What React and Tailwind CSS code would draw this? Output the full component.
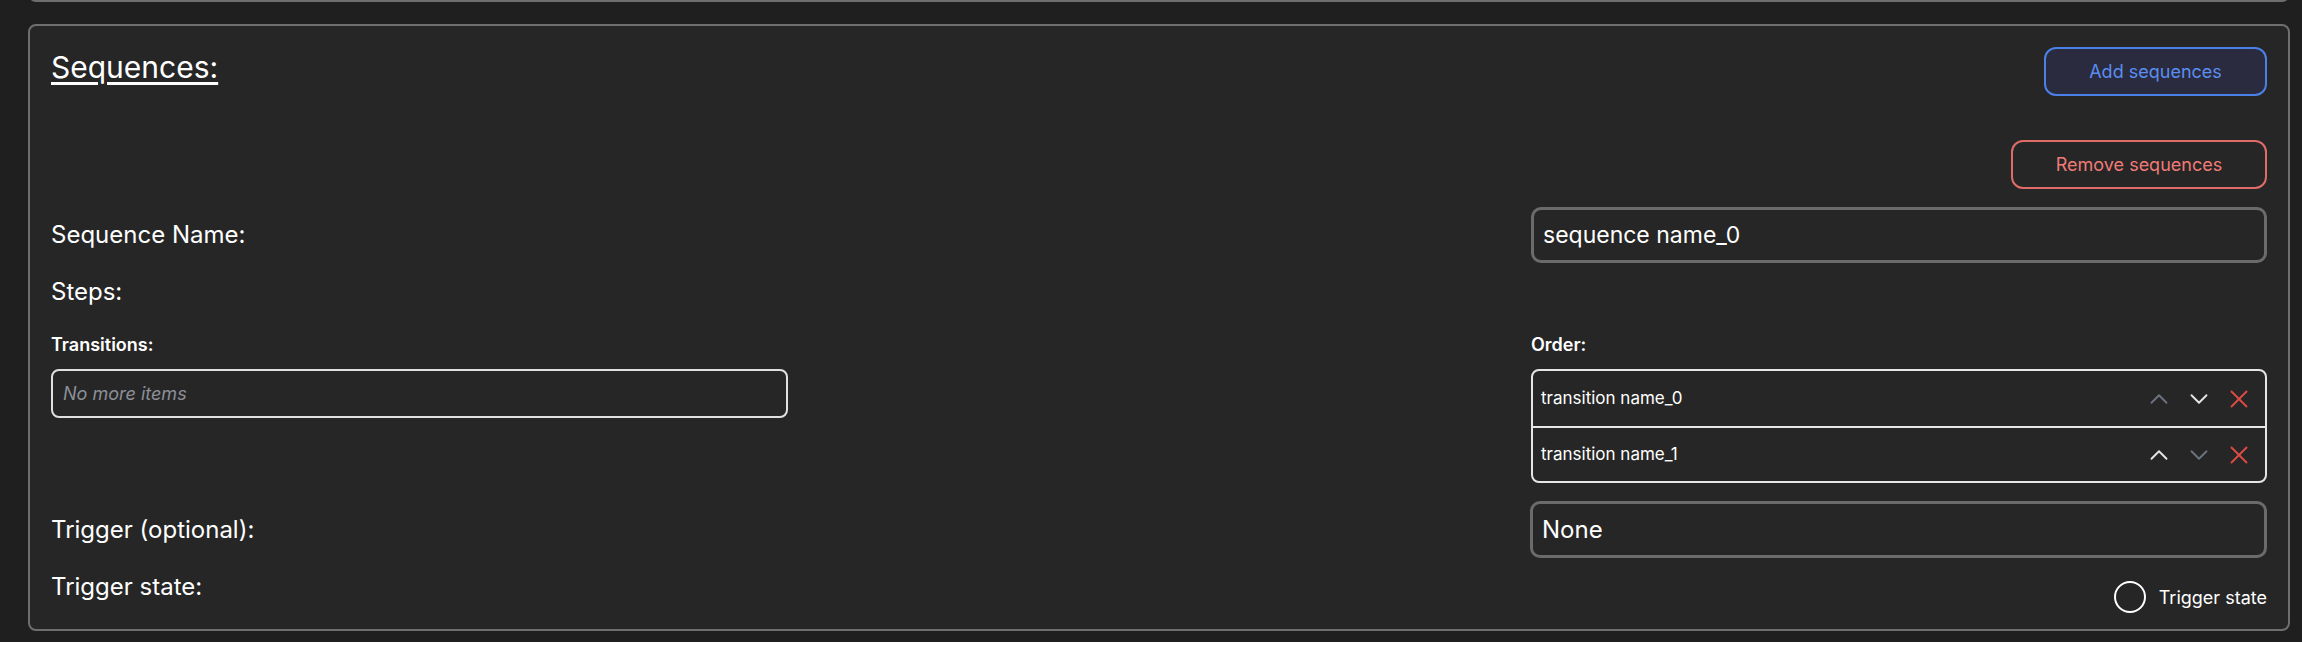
import { ChevronUp, ChevronDown, X } from "lucide-react";

const transitions = [
  { name: "transition name_0", first: true, last: false },
  { name: "transition name_1", first: false, last: true },
];

const OrderRow = ({ item, divider }) => (
  <div
    className={
      "flex h-[55px] items-center justify-between pl-[8px] pr-[11px] " +
      (divider ? "border-t-2 border-[#e5e5e5]" : "")
    }
  >
    <span className="text-[17px] text-white">{item.name}</span>
    <div className="flex items-center gap-[10px]">
      <ChevronUp
        size={30}
        strokeWidth={1.5}
        className={item.first ? "text-[#6b7280]" : "text-[#e5e5e5]"}
      />
      <ChevronDown
        size={30}
        strokeWidth={1.5}
        className={item.last ? "text-[#6b7280]" : "text-[#e5e5e5]"}
      />
      <X size={30} strokeWidth={1.5} className="text-[#dc4b45]" />
    </div>
  </div>
);

export default function App() {
  return (
    <div
      className="min-h-[648px] bg-[#1f1f1f] pl-[28px] pr-[12px]"
      style={{ fontFamily: "Inter, 'Noto Sans', sans-serif" }}
    >
      {/* bottom edge of the panel above */}
      <div className="-mt-[6px] h-[8px] rounded-b-lg border-2 border-t-0 border-[#6e6e6e]" />

      <div className="mt-[22px] rounded-lg border-2 border-[#6e6e6e] bg-[#262626] px-[21px] pt-[21px] pb-[16px] text-white">
        <div className="flex items-start justify-between">
          <h2 className="mt-[2px] text-[30px] leading-[36px] font-normal underline underline-offset-[4px]">
            Sequences:
          </h2>
          <button className="h-[49px] w-[223px] rounded-[12px] border-2 border-[#4a80e8] bg-[#2a2b3e] text-[18px] text-[#5a8ef2]">
            Add sequences
          </button>
        </div>

        <div className="mt-[44px] flex justify-end">
          <button className="h-[49px] w-[256px] rounded-[12px] border-2 border-[#e06c68] text-[18px] text-[#f07b76]">
            Remove sequences
          </button>
        </div>

        <div className="mt-[18px] flex items-center justify-between">
          <label className="text-[24px]">Sequence Name:</label>
          <div className="flex h-[56px] w-[736px] items-center rounded-[10px] border-[3px] border-[#6b6b6b] px-[9px] text-[23px]">
            sequence name_0
          </div>
        </div>

        <div className="mt-[13px] text-[24px] leading-[32px]">Steps:</div>

        <div className="mt-[25px] flex items-start justify-between">
          <div className="w-[737px]">
            <div className="text-[18px] leading-[24px] font-semibold">Transitions:</div>
            <div className="mt-[12px] flex h-[49px] items-center rounded-lg border-2 border-[#e0e0e0] px-[10px] text-[18px] italic text-[#8b8f98]">
              No more items
            </div>
          </div>
          <div className="w-[736px]">
            <div className="text-[18px] leading-[24px] font-semibold">Order:</div>
            <div className="mt-[12px] rounded-lg border-2 border-[#e5e5e5]">
              {transitions.map((t, i) => (
                <OrderRow key={t.name} item={t} divider={i > 0} />
              ))}
            </div>
          </div>
        </div>

        <div className="mt-[18px] flex items-center justify-between">
          <label className="text-[24px]">Trigger (optional):</label>
          <div className="flex h-[57px] w-[737px] items-center rounded-[10px] border-[3px] border-[#6b6b6b] px-[9px] text-[24px]">
            None
          </div>
        </div>

        <div className="mt-[13px] flex items-start justify-between">
          <label className="text-[24px] leading-[32px]">Trigger state:</label>
          <label className="mt-[10px] flex h-[32px] items-center gap-[13px]">
            <span className="h-[32px] w-[32px] rounded-full border-2 border-white" />
            <span className="text-[18px]">Trigger state</span>
          </label>
        </div>
      </div>
    </div>
  );
}
